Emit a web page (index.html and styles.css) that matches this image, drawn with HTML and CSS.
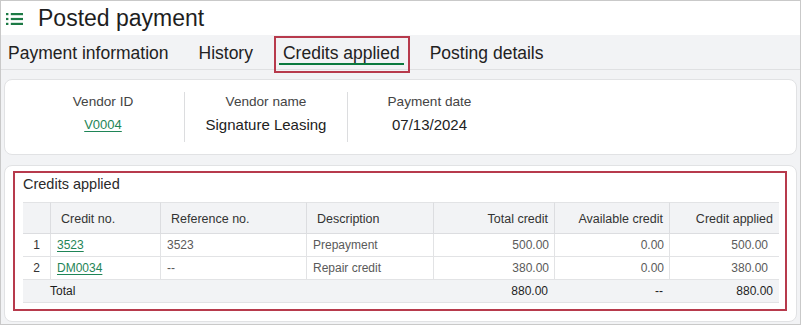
FILE: index.html
```html
<!DOCTYPE html>
<html lang="en">
<head>
<meta charset="utf-8">
<title>Posted payment</title>
<link rel="stylesheet" href="styles.css">
</head>
<body>
<div class="frame">
  <header class="topbar">
    <svg class="list-icon" width="17" height="12" viewBox="0 0 17 12" aria-hidden="true">
      <rect x="0" y="0" width="2.4" height="2.2"/>
      <rect x="4.8" y="0" width="12.2" height="2.2"/>
      <rect x="0" y="4.9" width="2.4" height="2.2"/>
      <rect x="4.8" y="4.9" width="12.2" height="2.2"/>
      <rect x="0" y="9.8" width="2.4" height="2.2"/>
      <rect x="4.8" y="9.8" width="12.2" height="2.2"/>
    </svg>
    <h1 class="title">Posted payment</h1>
  </header>

  <nav class="tabs">
    <a class="tab">Payment information</a>
    <a class="tab">History</a>
    <a class="tab active">Credits applied</a>
    <a class="tab">Posting details</a>
  </nav>

  <main class="content">
    <section class="card summary">
      <div class="field">
        <div class="label">Vendor ID</div>
        <a class="value link small">V0004</a>
      </div>
      <div class="field">
        <div class="label">Vendor name</div>
        <div class="value">Signature Leasing</div>
      </div>
      <div class="field last">
        <div class="label">Payment date</div>
        <div class="value">07/13/2024</div>
      </div>
    </section>

    <section class="card credits">
      <div class="highlight">
        <h2 class="section-title">Credits applied</h2>
        <table class="grid">
          <colgroup>
            <col class="c-num">
            <col class="c-credit">
            <col class="c-ref">
            <col class="c-desc">
            <col class="c-total">
            <col class="c-avail">
            <col class="c-applied">
          </colgroup>
          <thead>
            <tr>
              <th class="num"></th>
              <th>Credit no.</th>
              <th>Reference no.</th>
              <th>Description</th>
              <th class="r">Total credit</th>
              <th class="r">Available credit</th>
              <th class="r">Credit applied</th>
            </tr>
          </thead>
          <tbody>
            <tr>
              <td class="num">1</td>
              <td><a class="link">3523</a></td>
              <td>3523</td>
              <td>Prepayment</td>
              <td class="r">500.00</td>
              <td class="r">0.00</td>
              <td class="r last-col">500.00</td>
            </tr>
            <tr>
              <td class="num">2</td>
              <td><a class="link">DM0034</a></td>
              <td>--</td>
              <td>Repair credit</td>
              <td class="r">380.00</td>
              <td class="r">0.00</td>
              <td class="r last-col">380.00</td>
            </tr>
          </tbody>
          <tfoot>
            <tr>
              <td class="total-label" colspan="4">Total</td>
              <td class="r">880.00</td>
              <td class="r">--</td>
              <td class="r">880.00</td>
            </tr>
          </tfoot>
        </table>
      </div>
    </section>
  </main>
</div>
</body>
</html>
```

FILE: styles.css
```css
* { box-sizing: border-box; }

html, body {
  margin: 0;
  padding: 0;
}

body {
  font-family: "Liberation Sans", Arial, sans-serif;
  color: #222;
  background: #ffffff;
}

.frame {
  width: 801px;
  height: 325px;
  border: 1px solid #c9c9c9;
  background: #f2f3f5;
  overflow: hidden;
  display: flex;
  flex-direction: column;
}

/* ---------- Top bar ---------- */
.topbar {
  height: 34px;
  background: #ffffff;
  display: flex;
  align-items: center;
  padding-left: 5px;
  flex-shrink: 0;
}

.list-icon {
  fill: #1c7a45;
  display: block;
  margin-top: 1px;
}

.title {
  margin: 0 0 0 15px;
  font-size: 23px;
  font-weight: normal;
  color: #1e1e1e;
  line-height: 28px;
}

/* ---------- Tabs ---------- */
.tabs {
  height: 35px;
  display: flex;
  gap: 22px;
  padding-left: 3px;
  border-bottom: 1px solid #dfe0e2;
  flex-shrink: 0;
}

.tab {
  position: relative;
  padding: 2px 4px 0 4px;
  font-size: 17.5px;
  line-height: 32px;
  color: #222;
  white-space: nowrap;
}

.tab.active::after {
  content: "";
  position: absolute;
  left: 0;
  right: 0;
  bottom: 4px;
  height: 2px;
  background: #0b7a3e;
}

.tab.active::before {
  content: "";
  position: absolute;
  left: -5px;
  right: -6px;
  top: 1px;
  bottom: -4px;
  border: 2px solid #b73a4c;
}

/* ---------- Content ---------- */
.content {
  padding: 9px 3px 0 3px;
  display: flex;
  flex-direction: column;
  gap: 10px;
}

.card {
  background: #ffffff;
  border: 1px solid #e1e2e4;
  border-radius: 8px;
}

/* Summary card */
.summary {
  display: flex;
  padding: 12px 0 12px 17px;
}

.field {
  width: 163px;
  height: 50px;
  display: flex;
  flex-direction: column;
  align-items: center;
  padding-top: 1px;
  gap: 4px;
  border-right: 1px solid #dcdddf;
}

.field.last {
  border-right: none;
}

.label {
  font-size: 13.6px;
  line-height: 18px;
  color: #444;
}

.value {
  font-size: 15px;
  line-height: 20px;
  color: #222;
}

.value.small {
  font-size: 13px;
}

.link {
  color: #1f8557;
  text-decoration: underline;
  text-underline-offset: 2px;
  text-decoration-thickness: 1px;
}

/* Credits card */
.credits {
  padding: 5px 9px 10px 8px;
}

.highlight {
  border: 2px solid #b73a4c;
  padding: 2px 6px 6px 8px;
}

.section-title {
  margin: 0 0 9px 0;
  font-size: 14.5px;
  font-weight: normal;
  line-height: 18px;
  color: #2a2a2a;
}

.grid {
  width: 756px;
  table-layout: fixed;
  border-collapse: separate;
  border-spacing: 0;
  font-size: 12px;
}

.c-num { width: 27px; }
.c-credit { width: 110px; }
.c-ref { width: 146px; }
.c-desc { width: 127px; }
.c-total { width: 121px; }
.c-avail { width: 115px; }
.c-applied { width: 110px; }

.grid th {
  background: #f2f3f5;
  font-weight: normal;
  font-size: 12.5px;
  color: #333;
  text-align: left;
  line-height: 16px;
  padding: 8px 6px 6px 10px;
  border-top: 1px solid #e2e3e5;
  border-bottom: 1px solid #dcdde0;
  border-left: 1px solid #dcdde0;
  white-space: nowrap;
}

.grid th.num {
  border-left: none;
}

.grid td {
  line-height: 16px;
  padding: 3px 5px 3px 6px;
  color: #5a5a5a;
  border-bottom: 1px solid #e2e3e5;
  border-left: 1px solid #e2e3e5;
  white-space: nowrap;
}

.grid td.num {
  border-left: none;
  text-align: center;
  padding: 3px 0;
  color: #333;
}

.grid .r {
  text-align: right;
  padding-right: 6px;
}

.grid td.r {
  padding-right: 5px;
}

.grid td.last-col {
  padding-right: 11px;
}

.grid tfoot td {
  background: #f2f3f5;
  border-left: none;
  color: #1e1e1e;
  padding-right: 6px;
}

.grid tfoot td.r {
  padding-right: 6px;
}

.grid tfoot td.total-label {
  padding-left: 27px;
}
```
